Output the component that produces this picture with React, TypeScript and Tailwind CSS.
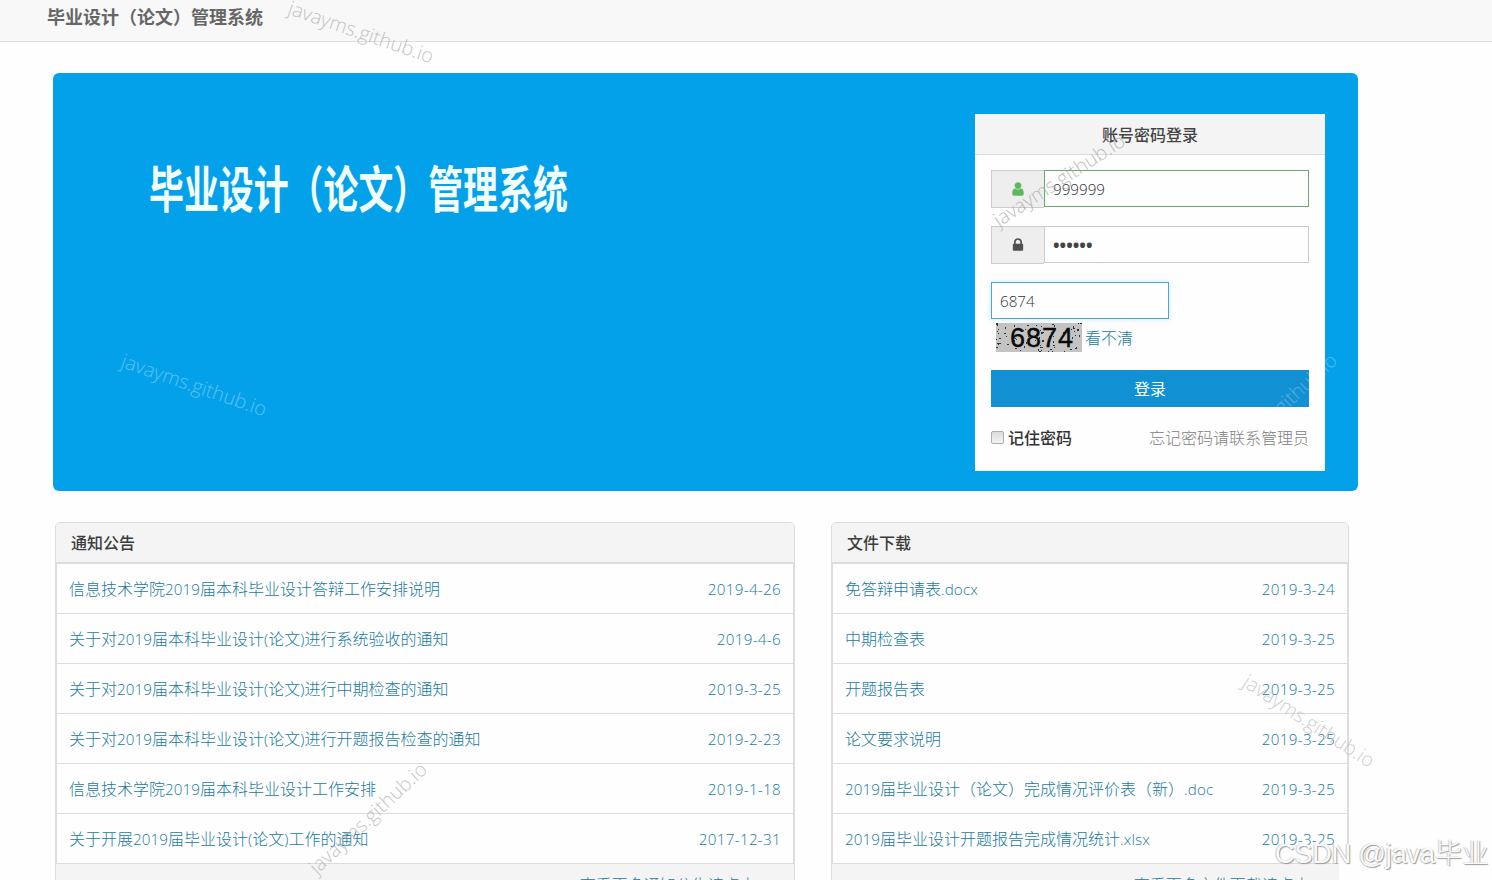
import React, { useState } from 'react'

interface Entry {
  title: string
  date: string
}

const NOTICES: Entry[] = [
  { title: '信息技术学院2019届本科毕业设计答辩工作安排说明', date: '2019-4-26' },
  { title: '关于对2019届本科毕业设计(论文)进行系统验收的通知', date: '2019-4-6' },
  { title: '关于对2019届本科毕业设计(论文)进行中期检查的通知', date: '2019-3-25' },
  { title: '关于对2019届本科毕业设计(论文)进行开题报告检查的通知', date: '2019-2-23' },
  { title: '信息技术学院2019届本科毕业设计工作安排', date: '2019-1-18' },
  { title: '关于开展2019届毕业设计(论文)工作的通知', date: '2017-12-31' },
]

const DOWNLOADS: Entry[] = [
  { title: '免答辩申请表.docx', date: '2019-3-24' },
  { title: '中期检查表', date: '2019-3-25' },
  { title: '开题报告表', date: '2019-3-25' },
  { title: '论文要求说明', date: '2019-3-25' },
  { title: '2019届毕业设计（论文）完成情况评价表（新）.doc', date: '2019-3-25' },
  { title: '2019届毕业设计开题报告完成情况统计.xlsx', date: '2019-3-25' },
]

// Page-wide text marks, one per spot
const MARKS = [
  'left-[281px] top-[18px] rotate-[19deg] text-[#b4b4b4]/80',
  'left-[114px] top-[371px] rotate-[19deg] text-white/35',
  'left-[979px] top-[166px] rotate-[-33deg] text-[#a8a8a8]/75',
  'left-[1198px] top-[395px] rotate-[-43deg] text-white/30',
  'left-[1229px] top-[707px] rotate-[33deg] text-[#b8b8b8]/70',
  'left-[288px] top-[804px] rotate-[-43deg] text-[#b0b0b0]/75',
]

// Latin runs are set a little smaller than the Chinese around them
function Mixed({ text }: { text: string }) {
  return (
    <>
      {text.split(/([\x20-\x7e]+)/).map((part, i) =>
        i % 2 ? <span key={i} className="text-[15.2px] tracking-[0.1px]">{part}</span> : part
      )}
    </>
  )
}

function UserIcon() {
  return (
    <svg viewBox="0 0 1792 1792" className="w-4 h-4 fill-[#5eb95e]">
      <path d="M1536 1399q0 109-62.5 187t-150.5 78h-854q-88 0-150.5-78t-62.5-187q0-85 8.5-160.5t31.5-152 58.5-131 94-89 134.5-34.5q131 128 313 128t313-128q76 0 134.5 34.5t94 89 58.5 131 31.5 152 8.5 160.5zm-256-887q0 159-112.5 271.5t-271.5 112.5-271.5-112.5-112.5-271.5 112.5-271.5 271.5-112.5 271.5 112.5 112.5 271.5z" />
    </svg>
  )
}

function LockIcon() {
  return (
    <svg viewBox="0 0 1792 1792" className="w-4 h-4 fill-[#505050]">
      <path d="M640 768h512v-192q0-106-75-181t-181-75-181 75-75 181v192zm832 96v576q0 40-28 68t-68 28h-960q-40 0-68-28t-28-68v-576q0-40 28-68t68-28h32v-192q0-184 132-316t316-132 316 132 132 316v192h32q40 0 68 28t28 68z" />
    </svg>
  )
}

function Captcha({ code }: { code: string }) {
  // fixed pseudo-random speckles
  const dots = Array.from({ length: 80 }, (_, i) => ({
    x: (i * 37 + ((i * i * 7) % 23)) % 85,
    y: (i * 17 + ((i * i * 5) % 13)) % 29,
  }))
  return (
    <svg width="86" height="29" viewBox="0 0 86 29" className="bg-[#c3c3c3]">
      {dots.map((d, i) => (
        <rect key={i} x={d.x} y={d.y} width={i % 3 ? 1 : 2} height={i % 4 ? 1 : 2} fill="#333" />
      ))}
      <text x="14" y="23.5" fontSize="27" fontWeight="400" textLength="63" fontFamily="Liberation Sans, Arial, sans-serif" fill="#0a0a0a" stroke="#0a0a0a" strokeWidth="0.4">{code}</text>
    </svg>
  )
}

function Panel({ title, entries, more, className }: { title: string, entries: Entry[], more: string, className: string }) {
  return (
    <section className={`border border-[#dddddd] rounded-t-[5px] overflow-hidden ${className}`}>
      <h3 className="h-[39px] px-[15px] bg-[#f4f4f4] leading-[40px] text-[16px] font-medium text-[#3c3c3c]">{title}</h3>
      <ul className="border border-t-2 border-[#dcdcdc]">
        {entries.map((entry, i) => (
          <li key={i} className="h-[50px] last:h-[49px] px-3 flex items-center justify-between border-b border-[#dcdcdc] last:border-b-0 text-[#187a9f]">
            <a className="leading-[24px]"><Mixed text={entry.title} /></a>
            <span className="pt-px text-[15.2px] tracking-[0.3px]">{entry.date}</span>
          </li>
        ))}
      </ul>
      <div className="h-12 pt-[9px] pr-[20px] bg-[#f4f4f4] text-right text-[#187a9f] leading-[24px]">{more}</div>
    </section>
  )
}

export default function App() {
  const [account, setAccount] = useState('999999')
  const [password, setPassword] = useState('123456')
  const [code, setCode] = useState('6874')
  const [remember, setRemember] = useState(false)

  return (
    <div className="relative w-[1492px] h-[880px] overflow-hidden bg-[#fefefe] text-[16px] font-light font-['Open_Sans','Noto_Sans_CJK_SC',sans-serif]">
      <header className="h-[42px] pl-[47px] bg-[#f8f8f8] border-b border-[#dedede]">
        <h1 className="leading-[34px] text-[18px] font-bold text-[#666666]">毕业设计（论文）管理系统</h1>
      </header>

      <main>
        <div className="mt-[31px] ml-[53px] w-[1305px] h-[418px] pt-[41px] pr-[33px] pl-[96px] flex justify-between rounded-[6px] bg-[#04a1eb]">
          <h2 className="mt-[38px] w-[420px] h-[74px] leading-[74px] text-[50px] font-bold text-[#f2ffff] whitespace-nowrap origin-left scale-x-[0.698]">毕业设计（论文）管理系统</h2>

          <form className="w-[350px] h-[357px] bg-[#fefefe]">
            <div className="h-[41px] leading-[42px] bg-[#f4f4f4] border-b border-[#dddddd] text-center font-medium text-[#444444]">账号密码登录</div>
            <div className="pt-[15px] px-4">
              <div className="flex">
                <span className="w-[53px] h-[38px] flex items-center justify-center bg-[#eeeeee] border border-r-0 border-[#cccccc]"><UserIcon /></span>
                <input
                  value={account}
                  onChange={(e) => setAccount(e.target.value)}
                  className="w-[265px] h-[37px] px-2 border border-[#6aa870] text-[15.2px] text-[#333333] outline-none"
                />
              </div>
              <div className="mt-[18px] flex">
                <span className="w-[53px] h-[38px] flex items-center justify-center bg-[#eeeeee] border border-r-0 border-[#cccccc]"><LockIcon /></span>
                <input
                  type="password"
                  value={password}
                  onChange={(e) => setPassword(e.target.value)}
                  className="w-[265px] h-[37px] px-2 border border-[#cccccc] text-[17.5px] font-bold text-[#444444] outline-none"
                />
              </div>
              <input
                value={code}
                onChange={(e) => setCode(e.target.value)}
                className="mt-[18px] block w-[178px] h-[37px] px-2 border border-[#4ba7cd] shadow-[0_0_5px_rgba(59,180,242,0.3)] text-[15.2px] text-[#333333] outline-none"
              />
              <div className="mt-1 ml-[5px] h-[29px] flex items-center gap-[3px]">
                <Captcha code="6874" />
                <a className="text-[#187a9f]">看不清</a>
              </div>
              <button type="button" className="mt-[18px] block w-[318px] h-[37px] bg-[#1190d3] text-[16px] text-white font-normal">登录</button>
              <div className="mt-[19px] h-6 flex items-center justify-between">
                <label className="flex items-center gap-1 font-medium text-[#333333]">
                  <input
                    type="checkbox"
                    checked={remember}
                    onChange={(e) => setRemember(e.target.checked)}
                    className="appearance-none w-[13px] h-[13px] mb-[2px] border border-[#adadad] rounded-[2px] bg-linear-to-b from-[#dcdcdc] to-[#f4f4f4]"
                  />
                  记住密码
                </label>
                <a className="text-[#808080]">忘记密码请联系管理员</a>
              </div>
            </div>
          </form>
        </div>

        <div className="mt-[31px] ml-[55px] flex gap-[36px]">
          <Panel title="通知公告" entries={NOTICES} more="查看更多通知公告请点击>>" className="w-[740px]" />
          <Panel title="文件下载" entries={DOWNLOADS} more="查看更多文件下载请点击>>" className="w-[518px]" />
        </div>
      </main>

      {MARKS.map((mark, i) => (
        <span key={i} className={`absolute w-[160px] text-center whitespace-nowrap leading-[28px] text-[19.8px] pointer-events-none ${mark}`}>javayms.github.io</span>
      ))}
      <span className="absolute left-[1339px] top-[853px] w-3 h-[27px] bg-[#fefefe]" />
      <span className="absolute left-[1275px] top-[833px] leading-[42px] text-[27px] tracking-[-0.1px] whitespace-nowrap text-[#fafafa] pointer-events-none font-['Liberation_Sans','Noto_Sans_CJK_SC',sans-serif] [text-shadow:1px_1px_1px_#999,-1px_0_1px_#ccc]">CSDN @java毕业</span>
    </div>
  )
}
